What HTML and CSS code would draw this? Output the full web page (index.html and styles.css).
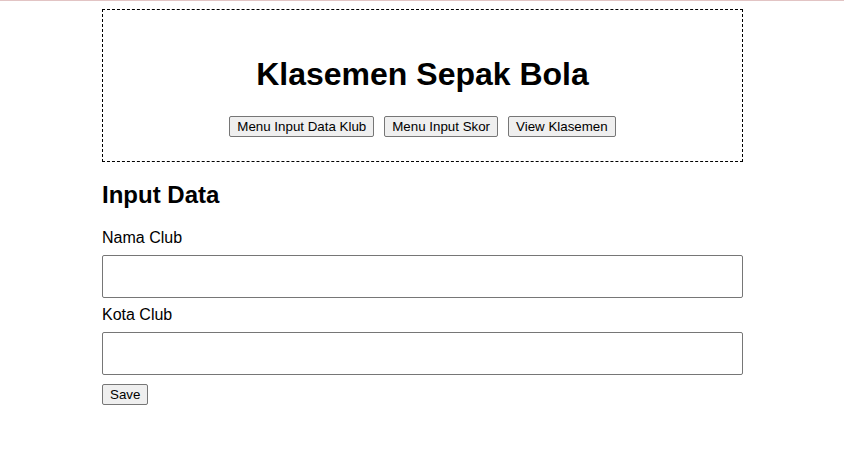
FILE: index.html
```html
<!DOCTYPE html>
<html lang="id">
<head>
<meta charset="utf-8">
<title>Klasemen Sepak Bola</title>
<link rel="stylesheet" href="styles.css">
</head>
<body>
<div class="topline"></div>
<div class="container">
  <header class="header">
    <h1 class="title">Klasemen Sepak Bola</h1>
    <nav class="menu">
      <button class="btn" type="button">Menu Input Data Klub</button>
      <button class="btn" type="button">Menu Input Skor</button>
      <button class="btn" type="button">View Klasemen</button>
    </nav>
  </header>
  <h2 class="section-title">Input Data</h2>
  <form class="form">
    <label class="label" for="nama">Nama Club</label>
    <input class="field" id="nama" type="text">
    <label class="label" for="kota">Kota Club</label>
    <input class="field" id="kota" type="text">
    <div class="actions"><button class="btn" type="button">Save</button></div>
  </form>
</div>
</body>
</html>
```
FILE: styles.css
```css
html, body {
  margin: 0;
  padding: 0;
  background: #fff;
}
body {
  font-family: "Liberation Sans", Arial, sans-serif;
  color: #000;
}
.topline {
  height: 1px;
  background: #e2c4c4;
}
.container {
  width: 641px;
  margin: 8px auto 0;
  padding-left: 1px;
}
.header {
  border: 1px dashed #000;
  padding: 23px 20px 24px;
  text-align: center;
}
.title {
  font-size: 32px;
  font-weight: bold;
  margin: 23px 0 23px;
  line-height: 37px;
}
.menu {
  display: flex;
  justify-content: center;
  gap: 10px;
}
.btn {
  font-family: "Liberation Sans", Arial, sans-serif;
  font-size: 13.333px;
  line-height: 17px;
  padding: 1px 7px;
  border: 1px solid #767676;
  border-radius: 2px;
  background: #efefef;
  color: #000;
}
.section-title {
  font-size: 24px;
  font-weight: bold;
  margin: 19px 0 20px;
  line-height: 28px;
}
.form {
  display: flex;
  flex-direction: column;
}
.label {
  font-size: 16px;
  line-height: 18px;
  margin-bottom: 8px;
}
.field {
  box-sizing: border-box;
  width: 100%;
  height: 43px;
  border: 1px solid #767676;
  border-radius: 2px;
  margin: 0 0 8px;
  padding: 1px 2px;
  font-size: 16px;
}
.actions {
  margin-top: 1px;
}
```
